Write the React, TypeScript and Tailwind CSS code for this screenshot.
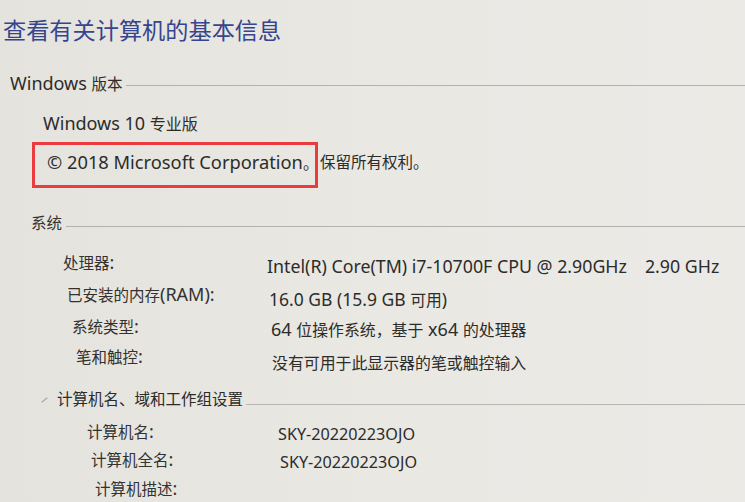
import React from "react";

const FONT = { fontFamily: '"Noto Sans", "Noto Sans CJK SC", sans-serif' };

function M({ t, l = "text-[18px]", c = "text-[15.5px]" }: { t: string; l?: string; c?: string }) {
  const parts = t.split(/([\u2E80-\u9FFF\u3000-\u303F\uFF00-\uFFEF]+)/);
  return (
    <>
      {parts.map((p, i) =>
        p === "" ? null : i % 2 === 1 ? (
          <span key={i} className={c}>{p}</span>
        ) : (
          <span key={i} className={l}>{p}</span>
        )
      )}
    </>
  );
}

function Row({
  pl,
  lw,
  label,
  value,
  vm,
  h,
  vl,
  vc,
}: {
  pl: string;
  lw: string;
  label: string;
  value?: React.ReactNode;
  vm: string;
  h: string;
  vl?: string;
  vc?: string;
}) {
  return (
    <div className={`flex items-start ${pl} ${h}`}>
      <div className={`${lw} shrink-0 whitespace-nowrap text-[#333230]`}>
        <M t={label} />
      </div>
      {value !== undefined && (
        <div className={`whitespace-pre ${vm}`}>
          {typeof value === "string" ? <M t={value} l={vl} c={vc} /> : value}
        </div>
      )}
    </div>
  );
}

export default function App() {
  return (
    <div
      className="w-[745px] h-[502px] overflow-hidden bg-gradient-to-r from-[#e5e3dd] via-[#e9e8e3] to-[#eceae6] text-[#2c2c2b] leading-[22px]"
      style={FONT}
    >
      <div className="pl-[3px] pt-[14px] text-[23.2px] leading-[32px] text-[#36458e] whitespace-nowrap">
        查看有关计算机的基本信息
      </div>

      {/* Windows 版本 */}
      <div className="mt-[26px] flex items-start pl-[10px] h-[22px]">
        <span className="whitespace-nowrap">
          <M t="Windows 版本" />
        </span>
        <div className="flex-1 h-px bg-[#b4b2ac] ml-[3px] mt-[13px]" />
      </div>

      <div className="pl-[43px] mt-[18px] whitespace-nowrap">
        <M t="Windows 10 专业版" c="text-[16px]" />
      </div>

      <div className="flex items-start pl-[32px] mt-[7px] h-[46px]">
        <div className="w-[286px] h-[46px] shrink-0 border-[3px] border-[#ec3b3e] pl-[12px] pt-[6px] whitespace-nowrap">
          <M t="© 2018 Microsoft Corporation。" l="text-[18.3px]" />
        </div>
        <span className="whitespace-nowrap ml-[2px] mt-[9px]">
          <M t="保留所有权利。" />
        </span>
      </div>

      {/* 系统 */}
      <div className="mt-[24px] flex items-start pl-[31px] h-[22px]">
        <span className="whitespace-nowrap text-[#333230]">
          <M t="系统" />
        </span>
        <div className="flex-1 h-px bg-[#b4b2ac] ml-[4px] mt-[14px]" />
      </div>

      <div className="mt-[17px] flex flex-col">
        <Row
          pl="pl-[63px]"
          lw="w-[204px]"
          label="处理器:"
          value={
            <span className="text-[17.8px]">
              Intel(R) Core(TM) i7-10700F CPU @ 2.90GHz<span className="ml-[18px]">2.90 GHz</span>
            </span>
          }
          vm="mt-[4px]"
          h="h-[32px]"
        />
        <Row pl="pl-[67px]" lw="w-[202px]" label="已安装的内存(RAM):" value="16.0 GB (15.9 GB 可用)" vm="mt-[5px]" h="h-[32px]" vl="text-[17.5px]" vc="text-[15.8px]" />
        <Row pl="pl-[72px]" lw="w-[199px]" label="系统类型:" value="64 位操作系统，基于 x64 的处理器" vm="mt-[3px]" h="h-[30px]" vc="text-[15.9px]" />
        <Row pl="pl-[76px]" lw="w-[196px]" label="笔和触控:" value="没有可用于此显示器的笔或触控输入" vm="mt-[7px]" h="h-[32px]" vc="text-[15.9px]" />
      </div>

      {/* 计算机名、域和工作组设置 */}
      <div className="mt-[11px] flex items-start pl-[41px] h-[22px]">
        <svg width="16" height="22" viewBox="0 0 16 22" className="shrink-0">
          <path d="M1 14 L6 10" stroke="#a9a7a1" strokeWidth="1.2" fill="none" strokeLinecap="round" />
        </svg>
        <span className="whitespace-nowrap">
          <M t="计算机名、域和工作组设置" />
        </span>
        <div className="flex-1 h-px bg-[#b8b6b0] ml-[3px] mt-[16px]" />
      </div>

      <div className="mt-[10px] flex flex-col">
        <Row pl="pl-[87px]" lw="w-[191px]" label="计算机名:" value="SKY-20220223OJO" vm="mt-[3px]" h="h-[28px]" vl="text-[16.2px]" />
        <Row pl="pl-[91px]" lw="w-[189px]" label="计算机全名:" value="SKY-20220223OJO" vm="mt-[3px]" h="h-[29px]" vl="text-[16.2px]" />
        <Row pl="pl-[95px]" lw="w-[180px]" label="计算机描述:" vm="" h="h-[28px]" />
      </div>
    </div>
  );
}
